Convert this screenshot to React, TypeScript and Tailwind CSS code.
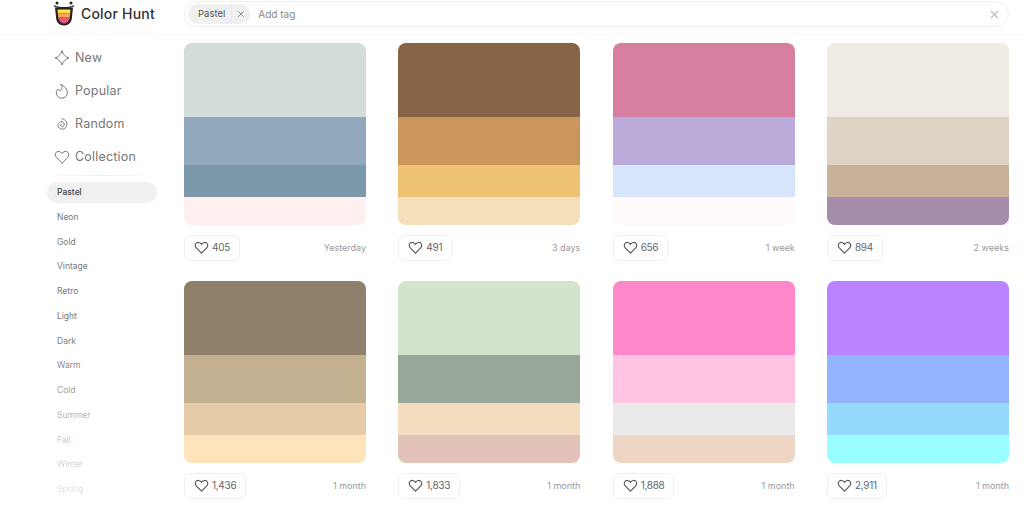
import { X } from "lucide-react";

const palettes = [
  { colors: ["#D3DEDC", "#92A9BD", "#7C99AC", "#FFEFEF"], likes: "405", when: "Yesterday" },
  { colors: ["#876445", "#CA965C", "#EEC373", "#F4DFBA"], likes: "491", when: "3 days" },
  { colors: ["#D77FA1", "#BAABDA", "#D6E5FA", "#FFF9F9"], likes: "656", when: "1 week" },
  { colors: ["#F0EBE3", "#DFD3C3", "#C7B198", "#A68DAD"], likes: "894", when: "2 weeks" },
  { colors: ["#8E806A", "#C3B091", "#E6CBA8", "#FFE3BB"], likes: "1,436", when: "1 month" },
  { colors: ["#D3E4CD", "#99A799", "#F4DCBF", "#E2C2B9"], likes: "1,833", when: "1 month" },
  { colors: ["#FF87CA", "#FFC4E1", "#EAEAEA", "#EED6C4"], likes: "1,888", when: "1 month" },
  { colors: ["#B983FF", "#94B3FD", "#94DAFF", "#99FEFF"], likes: "2,911", when: "1 month" },
];

const tags = [
  { name: "Pastel", cls: "text-[#444]" },
  { name: "Neon", cls: "text-[#777]" },
  { name: "Gold", cls: "text-[#777]" },
  { name: "Vintage", cls: "text-[#777]" },
  { name: "Retro", cls: "text-[#777]" },
  { name: "Light", cls: "text-[#777]" },
  { name: "Dark", cls: "text-[#808080]" },
  { name: "Warm", cls: "text-[#888]" },
  { name: "Cold", cls: "text-[#a0a0a0]" },
  { name: "Summer", cls: "text-[#b4b4b4]" },
  { name: "Fall", cls: "text-[#c8c8c8]" },
  { name: "Winter", cls: "text-[#d4d4d4]" },
  { name: "Spring", cls: "text-[#e0e0e0]" },
];

function Heart() {
  return (
    <svg width="15" height="15" viewBox="0 0 24 24" fill="none" stroke="#555" strokeWidth="1.800" strokeLinejoin="round">
      <path d="M12 21 3.600 12.600C1.300 10.200 1.500 6.800 3.600 5 5.900 3 9.600 3.400 12 7c2.400-3.600 6.100-4 8.400-2 2.100 1.800 2.300 5.200 0 7.600z" />
    </svg>
  );
}

function Logo() {
  return (
    <svg width="22" height="25" viewBox="0 0 22 25" className="shrink-0">
      <circle cx="4" cy="2" r="1.500" fill="#222" />
      <circle cx="18" cy="2" r="1.500" fill="#222" />
      <path d="M1 4.500C5 7.500 17 7.500 21 4.500" fill="none" stroke="#222" strokeWidth="1.400" />
      <path d="M2 6.500h18L19 16c0 5-3.500 8.500-8 8.500S3 21 3 16z" fill="#222" />
      <path d="M4.500 8.500h13l-.4 4H4.900z" fill="#FFDD55" />
      <path d="M4.900 12.500h12.200l-.2 3.500H5.100z" fill="#F9A94B" />
      <path d="M5.100 16h11.800c-.3 3.500-2.800 6.500-5.900 6.500S5.400 19.500 5.100 16z" fill="#E8557C" />
    </svg>
  );
}

function NavIcon({ kind }: { kind: string }) {
  return (
    <svg width="16" height="16" viewBox="0 0 16 16" fill="none" stroke="#777" strokeWidth="1" strokeLinejoin="round" strokeLinecap="round">
      {kind === "new" && <path d="M8 1c1 3.500 3.500 6 7 7-3.500 1-6 3.500-7 7-1-3.500-3.500-6-7-7 3.500-1 6-3.500 7-7z" />}
      {kind === "popular" && <path d="M6.500 1.500C8.500 3 8.500 5.500 7 7c-1 1-2.500.5-3-1C2.800 7 2.300 8.300 2.300 9.700a5.500 5.500 0 0 0 11 0C13.300 6 10.500 2.500 6.500 1.500z" />}
      {kind === "random" && <path d="M8 8.800c-.8-.8-1.900.2-1.400 1.200.8 1.300 3 .9 3.500-.6.700-2-1-3.900-3-3.600-2.600.4-3.800 3.400-2.400 5.500 1.900 2.700 6.200 2.300 7.700-.6 1.600-3.300-.4-7.400-4.300-8" />}
      {kind === "collection" && <path d="M8 14 2.300 8.300C.8 6.700 1 4.400 2.300 3.200 3.900 1.800 6.400 2.100 8 4.500c1.600-2.400 4.100-2.700 5.700-1.300 1.300 1.200 1.500 3.500 0 5.100z" />}
    </svg>
  );
}

function NavItem({ kind, label }: { kind: string; label: string }) {
  return (
    <div className="flex h-[33px] items-center gap-[5px] pl-[54px]">
      <NavIcon kind={kind} />
      <span className="pt-[1px] text-[12.500px] tracking-[0.2px] text-[#777]">{label}</span>
    </div>
  );
}

function Card({ colors, likes, when }: { colors: string[]; likes: string; when: string }) {
  const heights = ["h-[74px]", "h-[48px]", "h-[32px]", "h-[27.500px]"];
  return (
    <div className="flex h-[238px] w-[182px] flex-col">
      <div className="flex h-[181.500px] flex-col overflow-hidden rounded-[8px]">
        {colors.map((c, i) => (
          <div key={i} className={heights[i]} style={{ backgroundColor: c }} />
        ))}
      </div>
      <div className="mt-[10px] flex items-center justify-between">
        <div className="flex h-[26px] items-center gap-[3px] rounded-[6px] border border-[#f0f0f0] pl-[9px] pr-[9px]">
          <Heart />
          <span className="text-[10px] tracking-[-0.3px] text-[#666]">{likes}</span>
        </div>
        <span className="text-[9px] text-[#999]">{when}</span>
      </div>
    </div>
  );
}

export default function App() {
  return (
    <div className="h-[509px] w-[1024px] overflow-hidden bg-white font-['Inter',sans-serif]">
      {/* header */}
      <div className="flex h-[35px] items-start border-b border-[#f7f7f7]">
        <div className="flex w-[184px] items-center gap-[6px] pl-[53px] pt-[1px]">
          <Logo />
          <span className="text-[14px] font-medium tracking-[0.2px] text-[#333]">Color Hunt</span>
        </div>
        <div className="mt-[1px] flex h-[26px] w-[825px] items-center rounded-full border border-[#f0f0f0] pl-[3px] pr-[7px]">
          <div className="flex h-[20px] items-center rounded-full bg-[#f0f0f0]">
            <span className="border-r border-[#e8e8e8] pl-[10px] pr-[6px] text-[9.500px] leading-[20px] text-[#555]">Pastel</span>
            <X size={10} className="mx-[4px] text-[#777]" />
          </div>
          <span className="ml-[8px] flex-1 text-[10px] text-[#888]">Add tag</span>
          <X size={13} className="text-[#bbb]" />
        </div>
      </div>

      <div className="flex">
        {/* sidebar */}
        <div className="w-[184px] shrink-0 pt-[6px]">
          <NavItem kind="new" label="New" />
          <NavItem kind="popular" label="Popular" />
          <NavItem kind="random" label="Random" />
          <NavItem kind="collection" label="Collection" />
          <div className="ml-[47px] mt-[2px] h-px w-[110px] bg-gradient-to-r from-transparent via-[#eee] to-transparent" />
          <div className="mt-[4px] flex flex-col pl-[47px]">
            {tags.map((t, i) => (
              <div key={t.name} className="flex h-[24.750px] w-[110px] items-center">
                <div className={`flex h-[21px] w-full items-center pl-[10px] text-[8.500px] ${t.cls} ${i === 0 ? "rounded-full bg-[#f0f0f0] font-medium" : ""}`}>
                  {t.name}
                </div>
              </div>
            ))}
          </div>
        </div>

        {/* palettes */}
        <div className="grid w-[825px] grid-cols-[182px_182px_182px_182px] justify-between pt-[8px]">
          {palettes.map((p) => (
            <Card key={p.likes} colors={p.colors} likes={p.likes} when={p.when} />
          ))}
        </div>
      </div>
    </div>
  );
}
